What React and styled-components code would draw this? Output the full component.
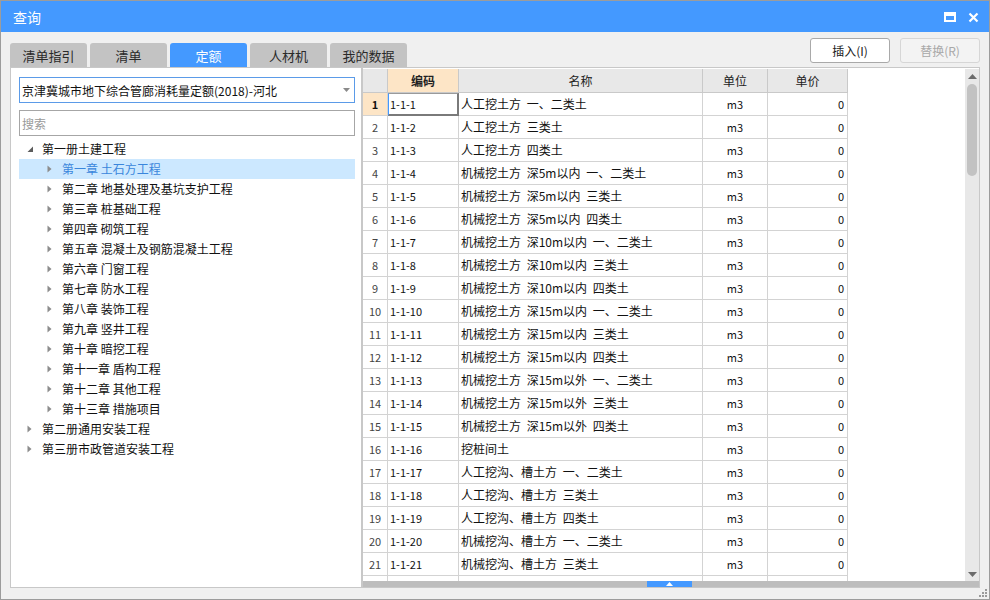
import React from "react";
import styled, { createGlobalStyle } from "styled-components";

const GlobalStyle = createGlobalStyle`
  html, body {
    margin: 0;
    padding: 0;
    background: #ffffff;
  }
  body {
    font-family: "Noto Sans CJK SC", "Noto Sans", sans-serif;
    font-size: 12px;
    color: #222;
  }
  * {
    box-sizing: border-box;
  }
`;

const tabs = ["清单指引", "清单", "定额", "人材机", "我的数据"];

const tree = [
  { level: 0, text: "第一册土建工程", open: true },
  { level: 1, text: "第一章 土石方工程", selected: true },
  { level: 1, text: "第二章 地基处理及基坑支护工程" },
  { level: 1, text: "第三章 桩基础工程" },
  { level: 1, text: "第四章 砌筑工程" },
  { level: 1, text: "第五章 混凝土及钢筋混凝土工程" },
  { level: 1, text: "第六章 门窗工程" },
  { level: 1, text: "第七章 防水工程" },
  { level: 1, text: "第八章 装饰工程" },
  { level: 1, text: "第九章 竖井工程" },
  { level: 1, text: "第十章 暗挖工程" },
  { level: 1, text: "第十一章 盾构工程" },
  { level: 1, text: "第十二章 其他工程" },
  { level: 1, text: "第十三章 措施项目" },
  { level: 0, text: "第二册通用安装工程" },
  { level: 0, text: "第三册市政管道安装工程" },
];

const names = [
  "人工挖土方 一、二类土",
  "人工挖土方 三类土",
  "人工挖土方 四类土",
  "机械挖土方 深5m以内 一、二类土",
  "机械挖土方 深5m以内 三类土",
  "机械挖土方 深5m以内 四类土",
  "机械挖土方 深10m以内 一、二类土",
  "机械挖土方 深10m以内 三类土",
  "机械挖土方 深10m以内 四类土",
  "机械挖土方 深15m以内 一、二类土",
  "机械挖土方 深15m以内 三类土",
  "机械挖土方 深15m以内 四类土",
  "机械挖土方 深15m以外 一、二类土",
  "机械挖土方 深15m以外 三类土",
  "机械挖土方 深15m以外 四类土",
  "挖桩间土",
  "人工挖沟、槽土方 一、二类土",
  "人工挖沟、槽土方 三类土",
  "人工挖沟、槽土方 四类土",
  "机械挖沟、槽土方 一、二类土",
  "机械挖沟、槽土方 三类土",
];

const rows = names.map((name, i) => ({
  no: i + 1,
  code: `1-1-${i + 1}`,
  name,
  unit: "m3",
  price: "0",
}));

export default function App() {
  return (
    <>
      <GlobalStyle />
      <Window>
        <TitleBar>
          <Title>查询</Title>
          <WinButtons>
            <svg width="12" height="10" viewBox="0 0 12 10">
              <rect x="1" y="1" width="10" height="8" fill="none" stroke="#fff" strokeWidth="2" />
              <rect x="1" y="1" width="10" height="3" fill="#fff" />
            </svg>
            <svg width="11" height="11" viewBox="0 0 11 11">
              <path d="M1.5 1.5 L9.5 9.5 M9.5 1.5 L1.5 9.5" stroke="#fff" strokeWidth="2.2" />
            </svg>
          </WinButtons>
        </TitleBar>

        <Toolbar>
          <Tabs>
            {tabs.map((t) => (
              <Tab key={t} $active={t === "定额"}>
                {t}
              </Tab>
            ))}
          </Tabs>
          <Buttons>
            <Button>插入(I)</Button>
            <Button disabled>替换(R)</Button>
          </Buttons>
        </Toolbar>

        <Content>
          <LeftPanel>
            <Select>
              <span>京津冀城市地下综合管廊消耗量定额(2018)-河北</span>
              <svg width="7" height="4" viewBox="0 0 7 4">
                <path d="M0 0 L7 0 L3.5 4 Z" fill="#8a8a8a" />
              </svg>
            </Select>
            <Search placeholder="搜索" />
            <Tree>
              {tree.map((n) => (
                <TreeRow key={n.text} $level={n.level} $selected={n.selected}>
                  <Arrow>
                    {n.open ? (
                      <svg width="7" height="7" viewBox="0 0 7 7">
                        <path d="M6 0.5 L6 6 L0.5 6 Z" fill="#5c5c5c" />
                      </svg>
                    ) : (
                      <svg width="5" height="8" viewBox="0 0 5 8">
                        <path d="M0.5 0.5 L4.5 4 L0.5 7.5 Z" fill="#8c8c8c" />
                      </svg>
                    )}
                  </Arrow>
                  <TreeText>{n.text}</TreeText>
                </TreeRow>
              ))}
            </Tree>
          </LeftPanel>

          <GridPane>
            <GridMain>
              <TableArea>
                <HeaderRow>
                  <HeadCell />
                  <HeadCell $hot>编码</HeadCell>
                  <HeadCell>名称</HeadCell>
                  <HeadCell>单位</HeadCell>
                  <HeadCell>单价</HeadCell>
                </HeaderRow>
                {rows.map((r) => (
                  <DataRow key={r.no}>
                    <NoCell $hot={r.no === 1}>{r.no}</NoCell>
                    <Cell $current={r.no === 1}>{r.code}</Cell>
                    <Cell $wide>{r.name}</Cell>
                    <Cell $align="center">{r.unit}</Cell>
                    <Cell $align="right">{r.price}</Cell>
                  </DataRow>
                ))}
                <DataRow>
                  <NoCell />
                  <Cell />
                  <Cell />
                  <Cell />
                  <Cell />
                </DataRow>
              </TableArea>
              <VScroll>
                <svg width="9" height="5" viewBox="0 0 9 5">
                  <path d="M0 5 L4.5 0 L9 5 Z" fill="#6b6b6b" />
                </svg>
                <Thumb />
                <ScrollSpacer />
                <svg width="9" height="5" viewBox="0 0 9 5">
                  <path d="M0 0 L9 0 L4.5 5 Z" fill="#6b6b6b" />
                </svg>
              </VScroll>
            </GridMain>
            <HBar>
              <Splitter>
                <svg width="7" height="4" viewBox="0 0 7 4">
                  <path d="M0 4 L3.5 0 L7 4 Z" fill="#fff" />
                </svg>
              </Splitter>
            </HBar>
          </GridPane>
        </Content>

        <Footer>
          <svg width="9" height="9" viewBox="0 0 9 9">
            <g fill="#9a9a9a">
              <rect x="7" y="1" width="2" height="2" />
              <rect x="4" y="4" width="2" height="2" />
              <rect x="7" y="4" width="2" height="2" />
              <rect x="1" y="7" width="2" height="2" />
              <rect x="4" y="7" width="2" height="2" />
              <rect x="7" y="7" width="2" height="2" />
            </g>
          </svg>
        </Footer>
      </Window>
    </>
  );
}

const Window = styled.div`
  width: 990px;
  height: 600px;
  border: 1px solid #9c9c9c;
  background: #f0f0f0;
  display: flex;
  flex-direction: column;
  overflow: hidden;
`;

const TitleBar = styled.div`
  height: 31px;
  flex: none;
  background: #4499ff;
  display: flex;
  align-items: center;
  justify-content: space-between;
  padding: 0 10px 0 12px;
`;

const Title = styled.div`
  color: #fff;
  font-size: 14px;
  line-height: 16px;
  padding-top: 1px;
`;

const WinButtons = styled.div`
  display: flex;
  align-items: center;
  gap: 12px;
  padding-top: 1px;
`;

const Toolbar = styled.div`
  height: 35px;
  flex: none;
  display: flex;
  justify-content: space-between;
  padding: 0 9px 0 9px;
`;

const Tabs = styled.div`
  display: flex;
  gap: 3px;
  align-self: flex-end;
`;

const Tab = styled.div`
  width: 77px;
  height: 24px;
  display: flex;
  align-items: center;
  justify-content: center;
  border-radius: 3px 3px 0 0;
  font-size: 13px;
  color: ${(p) => (p.$active ? "#fff" : "#2a2a2a")};
  background: ${(p) => (p.$active ? "#4499ff" : "#c3c3c3")};
`;

const Buttons = styled.div`
  display: flex;
  gap: 10px;
  padding-top: 6px;
`;

const Button = styled.button`
  width: 80px;
  height: 25px;
  font-family: inherit;
  font-size: 12px;
  border-radius: 3px;
  padding: 0;
  border: 1px solid ${(p) => (p.disabled ? "#d6d6d6" : "#a9a9a9")};
  background: ${(p) => (p.disabled ? "#f3f3f3" : "#ffffff")};
  color: ${(p) => (p.disabled ? "#a8a8a8" : "#1a1a1a")};
`;

const Content = styled.div`
  height: 521px;
  flex: none;
  display: flex;
  padding: 0 9px;
`;

const LeftPanel = styled.div`
  width: 352px;
  flex: none;
  background: #fff;
  border: 1px solid #c8c8c8;
  padding: 9px 6px 0 8px;
  display: flex;
  flex-direction: column;
`;

const Select = styled.div`
  height: 26px;
  border: 1px solid #5b9be8;
  display: flex;
  align-items: center;
  justify-content: space-between;
  padding: 0 4px 0 2px;
  font-size: 12px;
  color: #111;
`;

const Search = styled.input`
  height: 26px;
  margin-top: 7px;
  border: 1px solid #a6a6a6;
  outline: none;
  padding: 0 2px;
  font-family: inherit;
  font-size: 12px;

  &::placeholder {
    color: #9a9a9a;
  }
`;

const Tree = styled.div`
  margin-top: 3px;
  display: flex;
  flex-direction: column;
`;

const TreeRow = styled.div`
  height: 20px;
  display: flex;
  align-items: center;
  padding-left: ${(p) => 6 + p.$level * 20}px;
  background: ${(p) => (p.$selected ? "#cce8ff" : "transparent")};
  color: ${(p) => (p.$selected ? "#3a86dc" : "#111")};
`;

const Arrow = styled.span`
  width: 17px;
  display: flex;
  align-items: center;
  padding-left: 2px;
`;

const TreeText = styled.span`
  font-size: 12px;
  line-height: 20px;
`;

const GridPane = styled.div`
  flex: 1;
  background: #fff;
  border: 1px solid #c8c8c8;
  padding-top: 1px;
  display: flex;
  flex-direction: column;
`;

const GridMain = styled.div`
  height: 512px;
  display: flex;
`;

const TableArea = styled.div`
  flex: 1;
  overflow: hidden;
`;

const columns = "25px 71px 244px 65px 80px";

const HeaderRow = styled.div`
  display: grid;
  grid-template-columns: ${columns};
  height: 24px;
`;

const HeadCell = styled.div`
  background: ${(p) => (p.$hot ? "#fde5c6" : "#e8e8e8")};
  border-right: 1px solid #c9c9c9;
  border-bottom: 1px solid #c9c9c9;
  display: flex;
  align-items: center;
  justify-content: center;
  font-size: 12px;
  font-weight: ${(p) => (p.$hot ? 700 : 400)};
  color: #222;
`;

const DataRow = styled.div`
  display: grid;
  grid-template-columns: ${columns};
  height: 23px;
`;

const NoCell = styled.div`
  background: ${(p) => (p.$hot ? "#fde5c6" : "#fff")};
  border-right: 1px solid #d3d3d3;
  border-bottom: 1px solid #d3d3d3;
  display: flex;
  align-items: center;
  justify-content: center;
  padding-bottom: 1px;
  font-size: 11px;
  font-weight: ${(p) => (p.$hot ? 700 : 400)};
  color: ${(p) => (p.$hot ? "#111" : "#444")};
`;

const Cell = styled.div`
  border-right: 1px solid #d3d3d3;
  border-bottom: 1px solid #d3d3d3;
  display: flex;
  align-items: center;
  justify-content: ${(p) =>
    p.$align === "center" ? "center" : p.$align === "right" ? "flex-end" : "flex-start"};
  padding: 0 ${(p) => (p.$align === "right" ? 3 : 2)}px 1px;
  font-size: ${(p) => (p.$wide ? 12 : 11)}px;
  word-spacing: ${(p) => (p.$wide ? 3 : 0)}px;
  color: #111;
  white-space: nowrap;
  overflow: hidden;
  ${(p) =>
    p.$current &&
    `
    border-left: 1px solid #4499ff;
    border-right: 2px solid #7a7a7a;
    border-bottom: 2px solid #7a7a7a;
    border-top: 1px solid #9a9a9a;
    padding-left: 1px;
  `}
`;

const VScroll = styled.div`
  width: 14px;
  flex: none;
  background: #e8e8e8;
  display: flex;
  flex-direction: column;
  align-items: center;
  padding: 5px 0 4px;
`;

const Thumb = styled.div`
  width: 10px;
  height: 92px;
  margin-top: 5px;
  border-radius: 5px;
  background: #c2c2c2;
`;

const ScrollSpacer = styled.div`
  flex: 1;
`;

const HBar = styled.div`
  height: 6px;
  background: #bdbdbd;
  display: flex;
  justify-content: center;
  padding-right: 4px;
`;

const Splitter = styled.div`
  width: 45px;
  background: #4499ff;
  display: flex;
  align-items: center;
  justify-content: center;
`;

const Footer = styled.div`
  flex: 1;
  display: flex;
  align-items: flex-end;
  justify-content: flex-end;
  padding: 0 2px 2px 0;
`;
